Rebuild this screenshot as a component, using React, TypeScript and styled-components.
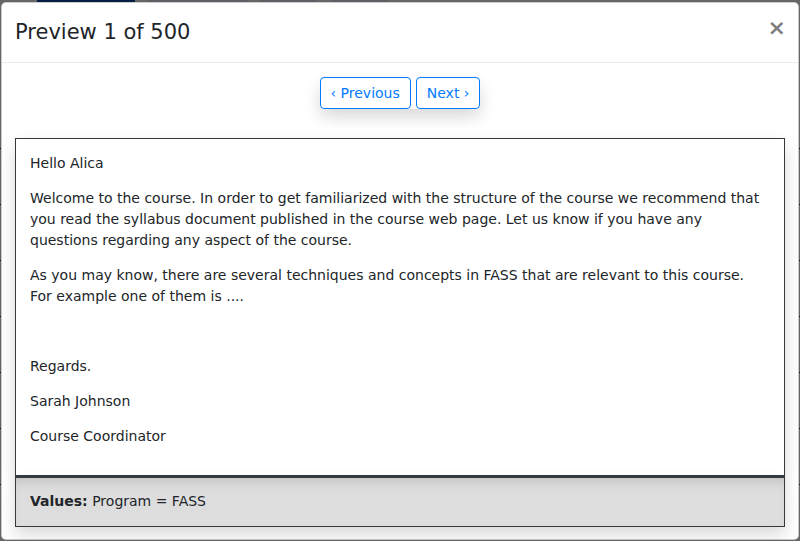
import React from 'react'
import styled, { createGlobalStyle } from 'styled-components'

const GlobalStyle = createGlobalStyle`
  html, body {
    margin: 0;
    padding: 0;
    background: #fff;
    font-family: "DejaVu Sans", "Noto Sans", sans-serif;
    color: #212529;
    font-size: 14px;
  }
  * {
    box-sizing: border-box;
  }
`

const Page = styled.div`
  width: 800px;
  height: 541px;
  overflow: hidden;
  position: relative;
`

const PageNav = styled.div`
  display: flex;
  align-items: center;
  gap: 14px;
  height: 40px;
  margin-top: -22px;
  padding-left: 37px;
`

const NavPill = styled.div<{ $wide?: boolean; $dark?: boolean }>`
  width: ${props => (props.$wide ? '98px' : '56px')};
  height: 30px;
  border-radius: 4px;
  background: ${props => (props.$dark ? '#0a4aa8' : '#e6eefc')};
`

const PageTable = styled.div`
  margin-top: 130px;
  border-top: 1px solid #222;
`

const PageRow = styled.div`
  height: 56px;
  border-bottom: 1px solid #333;
`

const Backdrop = styled.div`
  position: absolute;
  inset: 0;
  background: rgba(0, 0, 0, 0.6);
  padding: 2px 1px 0 1px;
`

const Modal = styled.div`
  width: 798px;
  background: #fff;
  border: 1px solid rgba(0, 0, 0, 0.2);
  border-radius: 5px;
  display: flex;
  flex-direction: column;
`

const Header = styled.div`
  display: flex;
  align-items: flex-start;
  justify-content: space-between;
  padding: 14px 15px 15px 13px;
  border-bottom: 1px solid #e9ecef;
`

const Title = styled.h5`
  margin: 0;
  font-size: 21px;
  font-weight: 400;
  line-height: 30px;
  color: #212529;
`

const Close = styled.button`
  border: 0;
  background: transparent;
  padding: 0 4px;
  margin: -4px -7px 0 auto;
  font-size: 22px;
  font-weight: 700;
  line-height: 30px;
  color: #000;
  opacity: 0.5;
  font-family: "DejaVu Sans", sans-serif;
  cursor: pointer;
`

const Body = styled.div`
  padding: 14px 13px 12px 13px;
  display: flex;
  flex-direction: column;
`

const Pager = styled.div`
  align-self: center;
  display: inline-flex;
  gap: 5px;
  box-shadow: 0 8px 16px rgba(0, 0, 0, 0.15);
  border-radius: 4px;
  margin-bottom: 29px;
`

const PagerButton = styled.button`
  height: 32px;
  padding: 0 10px;
  border: 1px solid #007bff;
  border-radius: 4px;
  background: #fff;
  color: #007bff;
  font-family: "DejaVu Sans", sans-serif;
  font-size: 14px;
  line-height: 21px;
  cursor: pointer;
`

const Letter = styled.div`
  border: 1px solid #343a40;
  padding: 14px 14px 14px 14px;
  box-shadow: 0 8px 16px rgba(0, 0, 0, 0.15);
  background: #fff;
`

const Para = styled.p`
  margin: 0 0 14px 0;
  line-height: 21px;
  font-size: 14px;
  min-height: 21px;
`

const Values = styled.div`
  border: 1px solid #343a40;
  border-top: 2px solid #343a40;
  background: #ddd;
  box-shadow: inset 0 8px 12px -6px rgba(0, 0, 0, 0.15), 0 8px 16px rgba(0, 0, 0, 0.15);
  padding: 13px 14px 14px 14px;
  line-height: 21px;
  font-size: 14px;
`

const Label = styled.b`
  font-weight: 700;
`

export default function App() {
  return (
    <Page>
      <GlobalStyle />
      <PageNav>
        <NavPill $wide $dark />
        <NavPill $wide />
        <NavPill />
        <NavPill />
      </PageNav>
      <PageTable>
        {[0, 1, 2, 3, 4, 5].map(i => (
          <PageRow key={i} />
        ))}
      </PageTable>
      <Backdrop>
        <Modal>
          <Header>
            <Title>Preview 1 of 500</Title>
            <Close aria-label="close">×</Close>
          </Header>
          <Body>
            <Pager>
              <PagerButton>‹ Previous</PagerButton>
              <PagerButton>Next ›</PagerButton>
            </Pager>
            <Letter>
              <Para>Hello Alica</Para>
              <Para>
                Welcome to the course. In order to get familiarized with the structure of the course we recommend that
                you read the syllabus document published in the course web page. Let us know if you have any
                questions regarding any aspect of the course.
              </Para>
              <Para>
                As you may know, there are several techniques and concepts in FASS that are relevant to this course.
                For example one of them is ....
              </Para>
              <Para>&nbsp;</Para>
              <Para>Regards.</Para>
              <Para>Sarah Johnson</Para>
              <Para>Course Coordinator</Para>
            </Letter>
            <Values>
              <Label>Values:</Label> Program = FASS
            </Values>
          </Body>
        </Modal>
      </Backdrop>
    </Page>
  )
}
